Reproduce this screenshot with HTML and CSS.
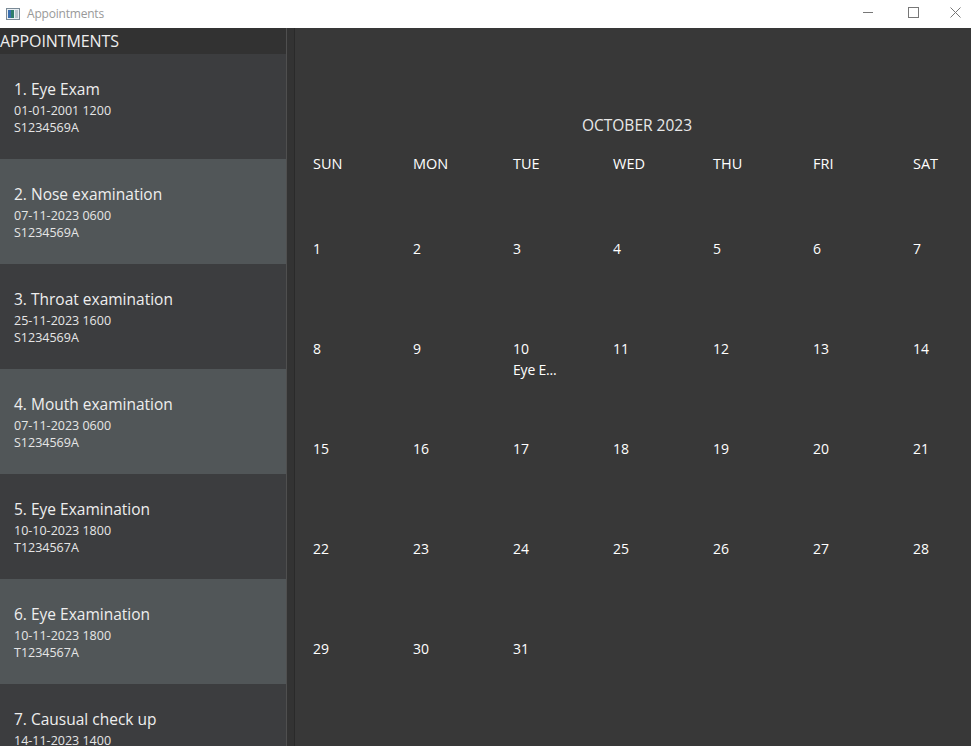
FILE: index.html
```html
<!DOCTYPE html>
<html>
<head>
<meta charset="utf-8">
<link rel="stylesheet" href="styles.css">
</head>
<body>
<div class="window">
  <div class="titlebar">
    <div class="app">
      <svg class="app-icon" width="14" height="12" viewBox="0 0 14 12">
        <rect x="0.5" y="0.5" width="13" height="11" fill="#e8eef2" stroke="#7a8a96"/>
        <rect x="2" y="2" width="6" height="8" fill="#2e7d6a"/>
        <rect x="2" y="2" width="3" height="8" fill="#3a6fb0"/>
        <rect x="9" y="2" width="3" height="8" fill="#b8c4cc"/>
      </svg>
      <span class="app-title">Appointments</span>
    </div>
    <div class="controls">
      <svg class="ctl" width="40" height="28" viewBox="0 0 40 28"><line x1="6" y1="12.5" x2="16" y2="12.5" stroke="#777" stroke-width="1"/></svg>
      <svg class="ctl" width="42" height="28" viewBox="0 0 42 28"><rect x="11.5" y="7.5" width="10" height="10" fill="none" stroke="#777" stroke-width="1"/></svg>
      <svg class="ctl" width="32" height="28" viewBox="0 0 32 28"><path d="M11.5 7.5 L21.5 17.5 M21.5 7.5 L11.5 17.5" stroke="#777" stroke-width="1"/></svg>
    </div>
  </div>
  <div class="main">
    <div class="sidebar">
      <div class="side-header">APPOINTMENTS</div>
      <div class="list">
        <div class="card">
          <div class="card-title">1. Eye Exam</div>
          <div class="card-line">01-01-2001 1200</div>
          <div class="card-line">S1234569A</div>
        </div>
        <div class="card alt">
          <div class="card-title">2. Nose examination</div>
          <div class="card-line">07-11-2023 0600</div>
          <div class="card-line">S1234569A</div>
        </div>
        <div class="card">
          <div class="card-title">3. Throat examination</div>
          <div class="card-line">25-11-2023 1600</div>
          <div class="card-line">S1234569A</div>
        </div>
        <div class="card alt">
          <div class="card-title">4. Mouth examination</div>
          <div class="card-line">07-11-2023 0600</div>
          <div class="card-line">S1234569A</div>
        </div>
        <div class="card">
          <div class="card-title">5. Eye Examination</div>
          <div class="card-line">10-10-2023 1800</div>
          <div class="card-line">T1234567A</div>
        </div>
        <div class="card alt">
          <div class="card-title">6. Eye Examination</div>
          <div class="card-line">10-11-2023 1800</div>
          <div class="card-line">T1234567A</div>
        </div>
        <div class="card">
          <div class="card-title">7. Causual check up</div>
          <div class="card-line">14-11-2023 1400</div>
          <div class="card-line">S1234569A</div>
        </div>
      </div>
    </div>
    <div class="splitter"></div>
    <div class="calendar">
      <div class="month">OCTOBER 2023</div>
      <div class="weekdays">
        <div>SUN</div><div>MON</div><div>TUE</div><div>WED</div><div>THU</div><div>FRI</div><div>SAT</div>
      </div>
      <div class="days">
        <div class="day">1</div><div class="day">2</div><div class="day">3</div><div class="day">4</div><div class="day">5</div><div class="day">6</div><div class="day">7</div>
        <div class="day">8</div><div class="day">9</div><div class="day">10<div class="event">Eye E...</div></div><div class="day">11</div><div class="day">12</div><div class="day">13</div><div class="day">14</div>
        <div class="day">15</div><div class="day">16</div><div class="day">17</div><div class="day">18</div><div class="day">19</div><div class="day">20</div><div class="day">21</div>
        <div class="day">22</div><div class="day">23</div><div class="day">24</div><div class="day">25</div><div class="day">26</div><div class="day">27</div><div class="day">28</div>
        <div class="day">29</div><div class="day">30</div><div class="day">31</div>
      </div>
    </div>
  </div>
</div>
</body>
</html>
```

FILE: styles.css
```css
* { box-sizing: border-box; }
html, body {
  margin: 0;
  padding: 0;
  width: 971px;
  height: 746px;
  overflow: hidden;
  font-family: "Open Sans", "Noto Sans", sans-serif;
}
.window {
  width: 971px;
  height: 746px;
  display: flex;
  flex-direction: column;
  background: #383838;
}
.titlebar {
  height: 28px;
  flex: none;
  background: #ffffff;
  display: flex;
  align-items: center;
  justify-content: space-between;
}
.app {
  display: flex;
  align-items: center;
  padding-left: 6px;
}
.app-icon { display: block; margin-right: 7px; margin-top: -1px; }
.app-title {
  font-size: 12px;
  color: #999999;
  letter-spacing: -0.2px;
  margin-top: -2px;
}
.controls { display: flex; align-items: center; }
.ctl { display: block; }
.main {
  flex: 1;
  display: flex;
  min-height: 0;
}
.sidebar {
  width: 287px;
  flex: none;
  display: flex;
  flex-direction: column;
  background: #333333;
  border-right: 1px solid #4f4f4f;
  overflow: hidden;
}
.side-header {
  height: 26px;
  flex: none;
  display: flex;
  align-items: center;
  font-size: 16px;
  color: #eeeeee;
  background: #323232;
  letter-spacing: -0.1px;
}
.list { flex: 1; }
.card {
  height: 105px;
  background: #3c3d3f;
  padding: 24px 0 0 14px;
}
.card.alt { background: #515658; }
.card-title {
  font-size: 15.5px;
  line-height: 22px;
  color: #eeeeee;
}
.card-line {
  font-size: 12.5px;
  line-height: 17px;
  color: #e6e6e6;
}
.card-title + .card-line { margin-top: 2px; }
.splitter {
  width: 8px;
  flex: none;
  background: #333333;
  border-right: 1px solid #2a2a2a;
}
.calendar {
  flex: 1;
  background: #383838;
  padding: 87px 0 0 18px;
  overflow: hidden;
  color: #ffffff;
}
.month {
  text-align: center;
  font-size: 15.5px;
  line-height: 20px;
  color: #e8e8e8;
  margin-left: -10px;
}
.weekdays {
  display: grid;
  grid-template-columns: repeat(7, 100px);
  margin-top: 19px;
  font-size: 14.5px;
  line-height: 20px;
}
.days {
  display: grid;
  grid-template-columns: repeat(7, 100px);
  grid-auto-rows: 100px;
  margin-top: 65px;
  font-size: 14px;
  line-height: 20px;
}
.event {
  line-height: 22px;
  letter-spacing: -0.2px;
}
```
